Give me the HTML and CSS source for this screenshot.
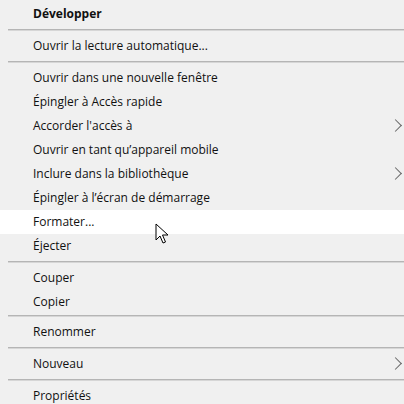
FILE: index.html
```html
<!DOCTYPE html>
<html lang="fr">
<head>
<meta charset="UTF-8">
<meta name="viewport" content="width=device-width, initial-scale=1.0">
<title>Menu contextuel</title>
<link rel="stylesheet" href="styles.css">
</head>
<body>
<div class="context-menu">
  <div class="item bold">Développer</div>
  <div class="sep"></div>
  <div class="item">Ouvrir la lecture automatique...</div>
  <div class="sep"></div>
  <div class="item">Ouvrir dans une nouvelle fenêtre</div>
  <div class="item">Épingler à Accès rapide</div>
  <div class="item has-sub">Accorder l'accès à</div>
  <div class="item">Ouvrir en tant qu’appareil mobile</div>
  <div class="item has-sub">Inclure dans la bibliothèque</div>
  <div class="item">Épingler à l’écran de démarrage</div>
  <div class="item hover">Formater...
    <svg class="cursor" width="14" height="22" viewBox="0 0 14 22">
      <path d="M1 1 L1 17 L5 13 L8 20 L10.5 19 L7.5 12 L13 12 Z" fill="#fff" stroke="#000" stroke-width="1" stroke-linejoin="round"/>
    </svg>
  </div>
  <div class="item">Éjecter</div>
  <div class="sep"></div>
  <div class="item">Couper</div>
  <div class="item">Copier</div>
  <div class="sep short"></div>
  <div class="item">Renommer</div>
  <div class="sep"></div>
  <div class="item has-sub">Nouveau</div>
  <div class="sep"></div>
  <div class="item">Propriétés</div>
</div>
</body>
</html>
```

FILE: styles.css
```css
body {
  margin: 0;
  background: #f0f0f0;
  font-family: 'Open Sans', 'Noto Sans', sans-serif;
  overflow: hidden;
}

.context-menu {
  padding-top: 2px;
  color: #111;
  font-size: 12px;
}

.item {
  position: relative;
  height: 24px;
  line-height: 24px;
  padding-left: 33px;
  white-space: nowrap;
}

.item.bold {
  font-weight: 700;
}

.item.hover {
  background: #fff;
}

/* submenu chevron, cut by the window edge */
.item.has-sub::after {
  content: '';
  position: absolute;
  right: 4px;
  top: 7px;
  width: 8px;
  height: 8px;
  border-top: 1px solid #666;
  border-right: 1px solid #666;
  transform: rotate(45deg);
}

.sep {
  height: 8px;
  display: flex;
  padding-left: 8px;
}

.sep.short {
  height: 6px;
}

.sep::before {
  content: '';
  flex: 1;
  height: 1px;
  margin-top: 3px;
  background: #b5b5b5;
  box-shadow: 0 1px 0 #d6d6d6;
}

.sep.short::before {
  margin-top: 1px;
}

.cursor {
  position: absolute;
  left: 155px;
  top: 13px;
}
```
